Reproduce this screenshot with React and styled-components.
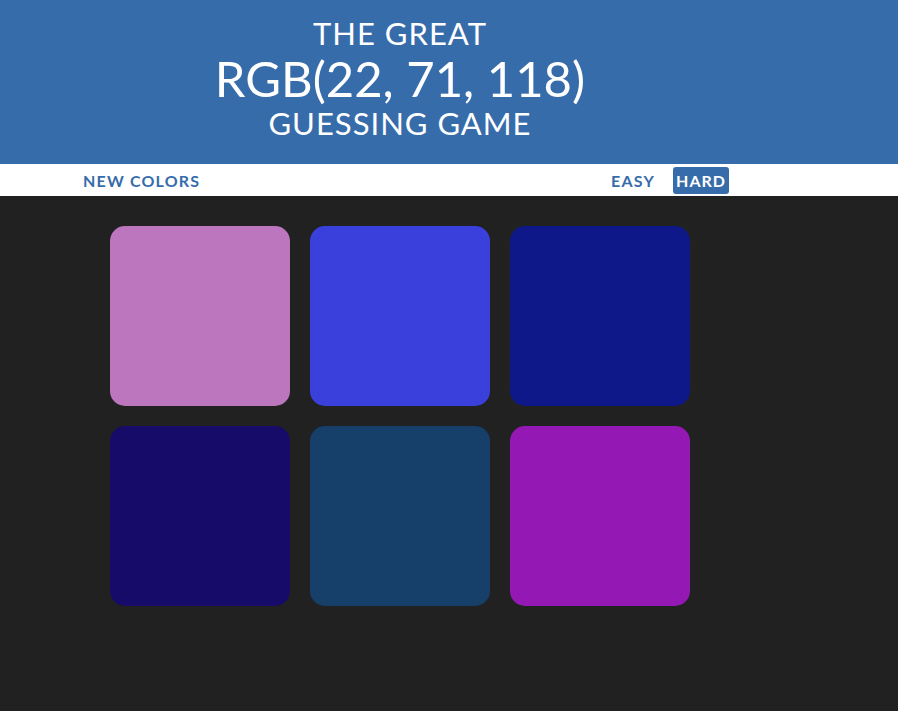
import styled, { createGlobalStyle } from 'styled-components';

const GlobalStyle = createGlobalStyle`
  body {
    margin: 0;
    background-color: #212121;
    font-family: Lato, "Open Sans", sans-serif;
  }
`;

const colors = [
  'rgb(188, 118, 190)',
  'rgb(58, 64, 220)',
  'rgb(14, 24, 136)',
  'rgb(23, 11, 106)',
  'rgb(22, 63, 106)',
  'rgb(148, 24, 180)',
];

const App = () => {
  return (
    <div>
      <GlobalStyle />
      <Header>
        <Inner>
          <Title>
            <Line>THE GREAT</Line>
            <Line big>RGB(22, 71, 118)</Line>
            <Line>GUESSING GAME</Line>
          </Title>
        </Inner>
      </Header>
      <Stripe>
        <StripeInner>
          <Button>NEW COLORS</Button>
          <Spacer />
          <Button>EASY</Button>
          <Button selected>HARD</Button>
        </StripeInner>
      </Stripe>
      <Container>
        {colors.map((c) => (
          <Square key={c} style={{ backgroundColor: c }} />
        ))}
      </Container>
    </div>
  );
};

const Header = styled.div`
  background-color: #376cab;
  color: white;
  height: 164px;
`;

const Inner = styled.div`
  width: 800px;
`;

const Title = styled.h1`
  margin: 0;
  padding-top: 14px;
  text-align: center;
  font-weight: 400;
`;

const Line = styled.span`
  display: block;
  font-size: ${(p) => (p.big ? '49px' : '31px')};
  line-height: ${(p) => (p.big ? '52px' : '38px')};
  letter-spacing: ${(p) => (p.big ? '0' : '1px')};
`;

const Stripe = styled.div`
  background-color: white;
  height: 32px;
`;

const StripeInner = styled.div`
  width: 650px;
  margin-left: 79px;
  height: 100%;
  display: flex;
  align-items: center;
  gap: 14px;
`;

const Spacer = styled.div`
  flex: 1;
`;

const Button = styled.button`
  border: none;
  outline: none;
  background: ${(p) => (p.selected ? '#376cab' : 'none')};
  color: ${(p) => (p.selected ? 'white' : '#376cab')};
  font-family: Lato, "Open Sans", sans-serif;
  font-weight: 700;
  font-size: 16px;
  letter-spacing: ${(p) => (p.selected ? '1px' : '1.2px')};
  text-transform: uppercase;
  height: 27px;
  padding: 0 ${(p) => (p.selected ? '3px' : '4px')};
  border-radius: 3px;
  cursor: pointer;
`;

const Container = styled.div`
  width: 600px;
  margin: 20px 0 0 100px;
  display: flex;
  flex-wrap: wrap;
`;

const Square = styled.div`
  width: 180px;
  height: 180px;
  margin: 10px;
  border-radius: 15px;
`;

export default App;
